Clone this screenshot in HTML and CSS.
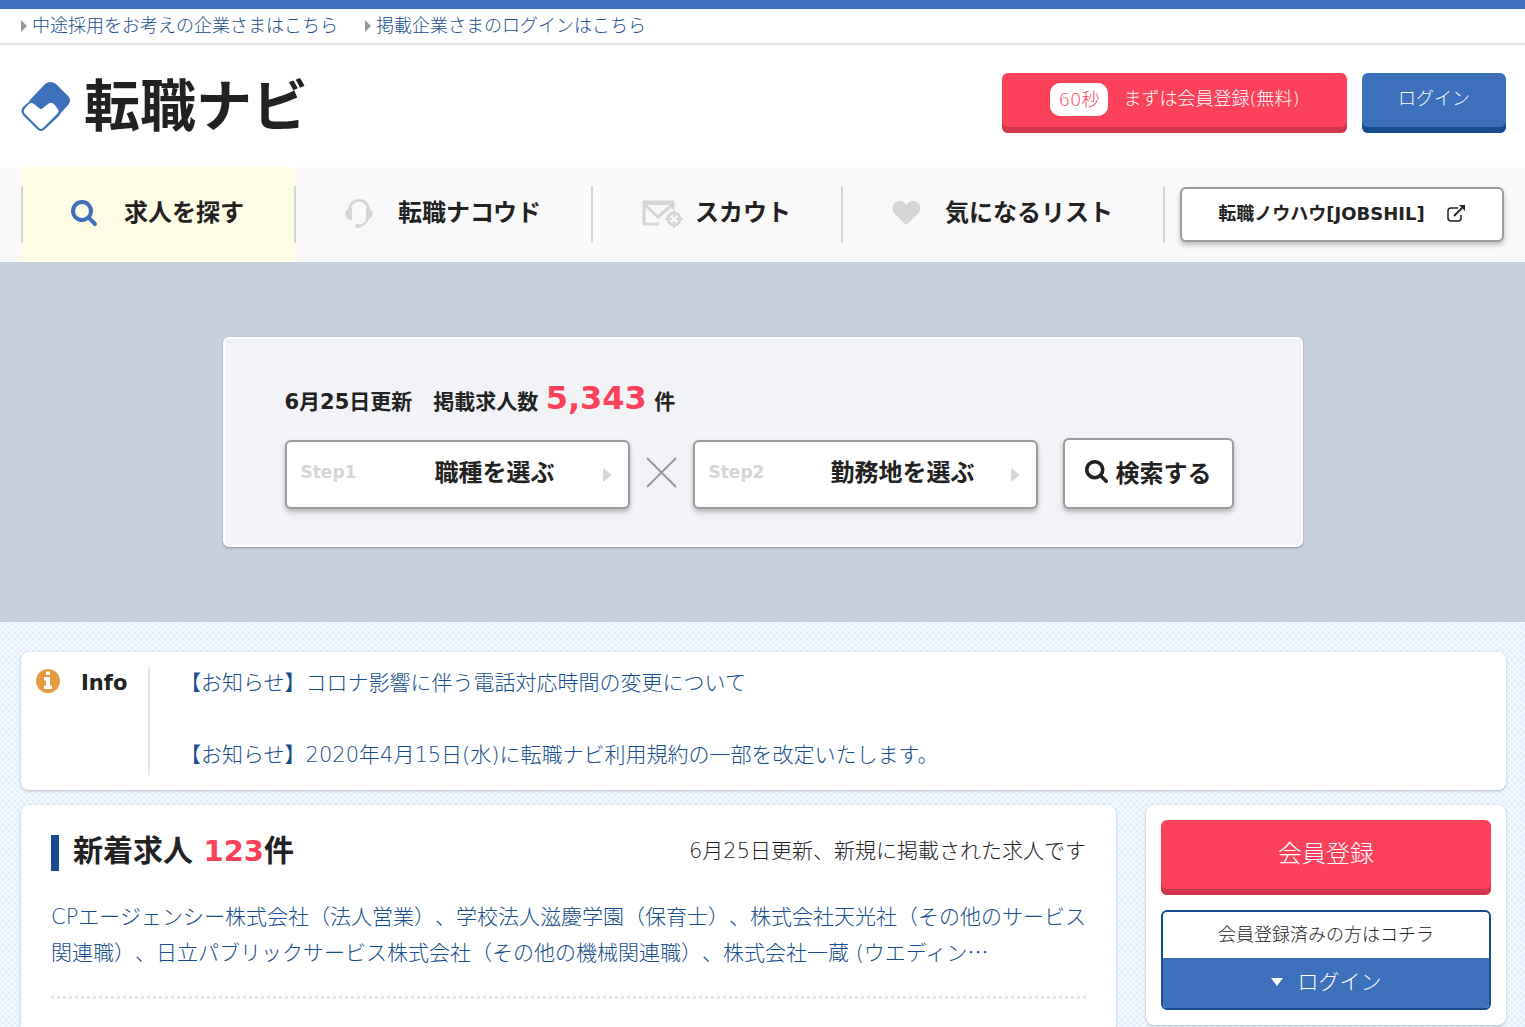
FILE: index.html
```html
<!DOCTYPE html>
<html lang="ja">
<head>
    <meta charset="UTF-8">
    <meta name="viewport" content="width=device-width, initial-scale=1.0">
    <title>転職ナビ</title>
    <link rel="stylesheet" href="styles.css">
</head>
<body>

<div class="topbar">
    <a href="#">中途採用をお考えの企業さまはこちら</a>
    <a href="#">掲載企業さまのログインはこちら</a>
</div>

<header class="header">
    <a href="#" class="logo">
        <svg width="50" height="50" viewBox="0 0 50 50">
            <path d="M24 2 Q29.500 -2 35 2 L47 14 Q51 18 47 23 L38 33 L20 30 L8 19 Z" fill="#3d70bb"/>
            <path d="M10 18 L2 25 Q-1 29 2 33 L16 47 Q20 51 24 47 L38 34 Q41 30 38 25 L30 16 Z" fill="#3d70bb"/>
            <path d="M5 25 L8 22 Q11 20 13 22 L18 26 Q20 28 22 26 L27 22 Q30 19 34 23 L36 26 Q39 29 36 32 L22 46 Q20 48 18 46 L4 32 Q1 29 5 25 Z" fill="#fff"/>
        </svg>
        <span>転職ナビ</span>
    </a>
    <div class="header-buttons">
        <a href="#" class="btn btn-red"><span class="badge">60秒</span>まずは会員登録(無料)</a>
        <a href="#" class="btn btn-blue">ログイン</a>
    </div>
</header>

<nav class="nav">
    <ul>
        <li class="active"><a href="#">
            <span class="nav-icon"><svg width="26" height="26" viewBox="0 128 1664 1664"><path fill="#3d70bb" d="M1152 832q0-185-131.500-316.500t-316.500-131.500-316.500 131.500-131.500 316.500 131.500 316.500 316.500 131.500 316.500-131.500 131.500-316.500zm512 832q0 52-38 90t-90 38q-54 0-90-38l-343-342q-179 124-399 124-143 0-273.500-55.500t-225-150-150-225-55.500-273.500 55.500-273.500 150-225 225-150 273.500-55.500 273.500 55.500 225 150 150 225 55.500 273.500q0 220-124 399l343 343q37 37 37 90z"/></svg></span>求人を探す</a></li>
        <li><a href="#">
            <span class="nav-icon"><svg width="28" height="34" viewBox="0 0 28 34"><path d="M4 14 C6 1 22 1 24 14" fill="none" stroke="#d3d5d7" stroke-width="3"/><path d="M7 12 V24 C-2 24 -2 12 7 12 Z M21 12 V24 C30 23 30 13 21 12 Z" fill="#d3d5d7"/><path d="M23 22 Q21 29 14 30" fill="none" stroke="#d3d5d7" stroke-width="2"/><ellipse cx="13" cy="30" rx="3" ry="2" fill="#d3d5d7"/></svg></span>転職ナコウド</a></li>
        <li><a href="#">
            <span class="nav-icon"><svg width="41" height="32" viewBox="0 0 41 32"><path d="M17 27 H2 V5 H31 V12" fill="none" stroke="#d3d5d7" stroke-width="3" stroke-linejoin="round"/><path d="M2 6 H31" stroke="#d3d5d7" stroke-width="4"/><path d="M3 8 L16 20 L30 8" fill="none" stroke="#d3d5d7" stroke-width="3"/><circle cx="32" cy="22" r="6" fill="#f9f9f9" stroke="#d3d5d7" stroke-width="3"/><path d="M32 13 V20 M32 24 V31 M23 22 H30 M34 22 H41" stroke="#d3d5d7" stroke-width="2"/></svg></span>スカウト</a></li>
        <li><a href="#">
            <span class="nav-icon"><svg width="29" height="26" viewBox="0 0 29 26"><path d="M14 25 L3 14 C-1 9 0 1 8 1 Q12 1 14 5 Q17 1 21 1 C29 1 30 9 26 14 Z" fill="#d3d5d7"/></svg></span>気になるリスト</a></li>
    </ul>
    <a href="#" class="outline-btn jobshil">転職ノウハウ[JOBSHIL]
        <svg width="19" height="18" viewBox="0 0 19 18" fill="none" stroke="#222"><path d="M11 3 H4 Q1 3 1 6 V13 Q1 16 4 16 H11 Q14 16 14 13 V10" stroke-width="1.500"/><path d="M7 11 L15 3" stroke-width="2"/><path d="M12 0 H18 V6 Z" fill="#222" stroke="none"/></svg>
    </a>
</nav>

<section class="hero">
    <div class="search-box">
        <p class="count">6月25日更新　掲載求人数 <strong>5,343</strong> 件</p>
        <div class="search-row">
            <button type="button" class="outline-btn step"><small>Step1</small><span>職種を選ぶ</span><i class="arrow"></i></button>
            <svg class="times" width="31" height="31" viewBox="0 0 31 31"><path d="M1 1 L30 30 M30 1 L1 30" stroke="#999" stroke-width="2"/></svg>
            <button type="button" class="outline-btn step"><small>Step2</small><span>勤務地を選ぶ</span><i class="arrow"></i></button>
            <button type="submit" class="outline-btn search-btn">
                <svg width="23" height="23" viewBox="0 128 1664 1664"><path fill="#222" d="M1152 832q0-185-131.500-316.500t-316.500-131.500-316.500 131.500-131.500 316.500 131.500 316.500 316.500 131.500 316.500-131.500 131.500-316.500zm512 832q0 52-38 90t-90 38q-54 0-90-38l-343-342q-179 124-399 124-143 0-273.500-55.500t-225-150-150-225-55.500-273.500 55.500-273.500 150-225 225-150 273.500-55.500 273.500 55.500 225 150 150 225 55.500 273.500q0 220-124 399l343 343q37 37 37 90z"/></svg>
                検索する
            </button>
        </div>
    </div>
</section>

<div class="container">
    <!-- Info -->
    <section class="info card">
        <h2>
            <svg width="24" height="24" viewBox="128 128 1536 1536"><path fill="#e49c41" d="M1152 1376v-160q0-14-9-23t-23-9h-96v-512q0-14-9-23t-23-9h-320q-14 0-23 9t-9 23v160q0 14 9 23t23 9h96v320h-96q-14 0-23 9t-9 23v160q0 14 9 23t23 9h448q14 0 23-9t9-23zm-128-896v-160q0-14-9-23t-23-9h-192q-14 0-23 9t-9 23v160q0 14 9 23t23 9h192q14 0 23-9t9-23zm640 416q0 209-103 385.500t-279.500 279.500-385.500 103-385.500-103-279.500-279.500-103-385.500 103-385.500 279.500-279.500 385.500-103 385.500 103 279.500 279.500 103 385.500z"/></svg>
            Info
        </h2>
        <ul>
            <li><a href="#">【お知らせ】コロナ影響に伴う電話対応時間の変更について</a></li>
            <li><a href="#">【お知らせ】2020年4月15日(水)に転職ナビ利用規約の一部を改定いたします。</a></li>
        </ul>
    </section>

    <div class="columns">
        <!-- New jobs -->
        <main class="card new-jobs">
            <div class="title-row">
                <h2>新着求人 <em>123</em>件</h2>
                <p>6月25日更新、新規に掲載された求人です</p>
            </div>
            <a href="#" class="job-list">CPエージェンシー株式会社（法人営業）、学校法人滋慶学園（保育士）、株式会社天光社（その他のサービス関連職）、日立パブリックサービス株式会社（その他の機械関連職）、株式会社一蔵 (ウエディン<span class="dots">…</span></a>
        </main>

        <!-- Member -->
        <aside class="card member">
            <a href="#" class="btn btn-red register">会員登録</a>
            <div class="login-box">
                <p>会員登録済みの方はコチラ</p>
                <a href="#"><i class="caret"></i>ログイン</a>
            </div>
        </aside>
    </div>
</div>

</body>
</html>
```

FILE: styles.css
```css
* {
    box-sizing: border-box;
}

body {
    display: flex;
    flex-direction: column;
    min-height: 100vh;
    margin: 0;
    border-top: 9px solid #3d70bb;
    font-family: "DejaVu Sans", "Noto Sans CJK JP", sans-serif;
    font-size: 21px;
    font-weight: 300;
    line-height: 36px;
    text-spacing-trim: space-all;
    color: #222;
    background-color: #f5faff;
    background-image: radial-gradient(#e0effe 1px, transparent 2px), radial-gradient(#e0effe 1px, transparent 2px);
    background-size: 6px 6px;
    background-position: 0 0, 3px 3px;
}

h2, p, ul {
    margin: 0;
    padding: 0;
}

ul {
    list-style: none;
}

a {
    color: #174d8c;
    text-decoration: none;
}

button {
    font-family: inherit;
    cursor: pointer;
}

svg {
    flex-shrink: 0;
}

/* top links */
.topbar {
    display: flex;
    gap: 27px;
    padding: 0 21px;
    border-bottom: 2px solid #e5e5e5;
    background: #fff;
    font-size: 18px;
    line-height: 34px;
}

.topbar a {
    display: flex;
    align-items: center;
    gap: 5px;
}

.topbar a::before {
    content: "";
    border: 6px solid transparent;
    border-left-color: #999;
    border-right-width: 0;
}

/* header */
.header {
    display: flex;
    justify-content: space-between;
    align-items: flex-start;
    padding: 28px 19px 34px 21px;
    background: #fff;
}

.logo {
    display: flex;
    align-items: center;
    gap: 13px;
    height: 60px;
    padding-top: 8px;
    color: #222;
    font-size: 56px;
    font-weight: bold;
    line-height: 60px;
}

.header-buttons {
    display: flex;
    gap: 15px;
}

.btn {
    display: flex;
    justify-content: center;
    align-items: center;
    height: 60px;
    padding-bottom: 8px;
    border-radius: 6px;
    color: #fff;
    font-size: 18px;
}

.btn-red {
    width: 345px;
    background: #fc415b;
    box-shadow: inset 0 -6px #d0364c;
}

.btn-blue {
    width: 144px;
    background: #3d70bb;
    box-shadow: inset 0 -6px #174d8c;
}

.badge {
    margin-right: 15px;
    padding: 0 9px;
    border-radius: 10px;
    background: #fff;
    color: #fc415b;
    line-height: 33px;
}

/* global nav */
.nav {
    display: flex;
    justify-content: space-between;
    align-items: center;
    padding: 0 21px;
    background: #f9f9f9;
}

.nav ul {
    display: flex;
}

.nav li {
    padding: 19px 0;
}

.nav li.active {
    background: #fffde5;
}

.nav li a {
    display: flex;
    align-items: center;
    height: 57px;
    padding: 0 50px 4px 49px;
    border-right: 2px solid #d3d5d7;
    color: #222;
    font-size: 24px;
    font-weight: bold;
}

.nav li:first-child a {
    padding-left: 48px;
    border-left: 2px solid #d3d5d7;
}

.nav-icon {
    display: flex;
    width: 53px;
}

.outline-btn {
    display: flex;
    align-items: center;
    border: 2px solid #999b9d;
    border-radius: 6px;
    background: #fff;
    box-shadow: 0 3px 5px rgba(0, 0, 0, 0.25);
    color: #222;
    font-size: 24px;
    font-weight: bold;
}

.jobshil {
    justify-content: center;
    gap: 22px;
    width: 324px;
    height: 55px;
    padding-bottom: 2px;
    font-size: 18px;
}

/* search */
.hero {
    padding: 75px 20px;
    background: #c6d0dd;
}

.search-box {
    max-width: 1080px;
    margin: 0 auto;
    padding: 36px 60px;
    border: 2px solid #fff;
    border-radius: 6px;
    background: #f1f3f7;
    box-shadow: 0 1px 2px rgba(0, 0, 0, 0.3);
}

.count {
    height: 63px;
    font-weight: bold;
    line-height: 46px;
}

.count strong {
    color: #fc415b;
    font-size: 32px;
}

.search-row {
    display: flex;
    align-items: flex-end;
}

.step {
    width: 345px;
    height: 69px;
    padding: 0 16px 8px 14px;
}

.step small {
    width: 80px;
    padding-top: 2px;
    color: #d3d5d7;
    font-size: 17px;
    text-align: left;
}

.step span {
    flex: 1;
    padding-left: 26px;
    text-align: center;
}

.arrow {
    margin: 8px 0 0 20px;
    border: 7px solid transparent;
    border-left: 9px solid #d3d5d7;
    border-right-width: 0;
}

.times {
    margin: 0 16px 21px;
}

.search-btn {
    justify-content: center;
    gap: 8px;
    width: 171px;
    height: 71px;
    margin-left: 25px;
    padding: 0 0 4px;
}

/* contents */
.container {
    display: flex;
    flex-direction: column;
    flex: 1;
    gap: 15px;
    padding: 30px 19px 0 21px;
}

.card {
    border-radius: 8px;
    background: #fff;
    box-shadow: 0 1px 3px rgba(0, 0, 0, 0.25);
}

.info {
    display: flex;
    padding: 15px;
}

.info h2 {
    display: flex;
    align-items: flex-start;
    gap: 21px;
    width: 114px;
    border-right: 2px solid #e5e5e5;
    font-size: 21px;
    line-height: 32px;
}

.info h2 svg {
    margin-top: 2px;
}

.info ul {
    display: grid;
    gap: 40px;
    padding: 0 0 4px 30px;
    line-height: 32px;
}

.columns {
    display: flex;
    flex: 1;
    align-items: flex-start;
    gap: 30px;
}

.new-jobs {
    flex: 1;
    align-self: stretch;
    padding: 30px 30px 0;
    border-radius: 8px 8px 0 0;
}

.title-row {
    display: flex;
    justify-content: space-between;
    height: 36px;
    line-height: 32px;
}

.title-row h2 {
    padding-left: 14px;
    border-left: 8px solid #174d8c;
    font-size: 30px;
}

.title-row em {
    color: #fc415b;
    font-size: 29px;
    font-style: normal;
}

.job-list {
    display: block;
    margin-top: 28px;
    padding-bottom: 28px;
    background: repeating-linear-gradient(90deg, #e5e5e5 0 3px, transparent 3px 6px) bottom / 100% 3px no-repeat;
}

.dots {
    font-family: "Noto Sans CJK JP", sans-serif;
    line-height: 20px;
}

.member {
    width: 360px;
    padding: 15px;
}

.register {
    width: auto;
    height: 75px;
    font-size: 24px;
}

.login-box {
    margin-top: 15px;
    border: 2px solid #174d8c;
    border-radius: 6px;
    overflow: hidden;
    text-align: center;
}

.login-box p {
    font-size: 18px;
    line-height: 46px;
}

.login-box a {
    display: flex;
    justify-content: center;
    align-items: center;
    gap: 15px;
    height: 50px;
    padding-bottom: 2px;
    background: #3d70bb;
    color: #fff;
}

.caret {
    border: 6px solid transparent;
    border-top: 8px solid #fff;
    border-bottom-width: 0;
}
```
